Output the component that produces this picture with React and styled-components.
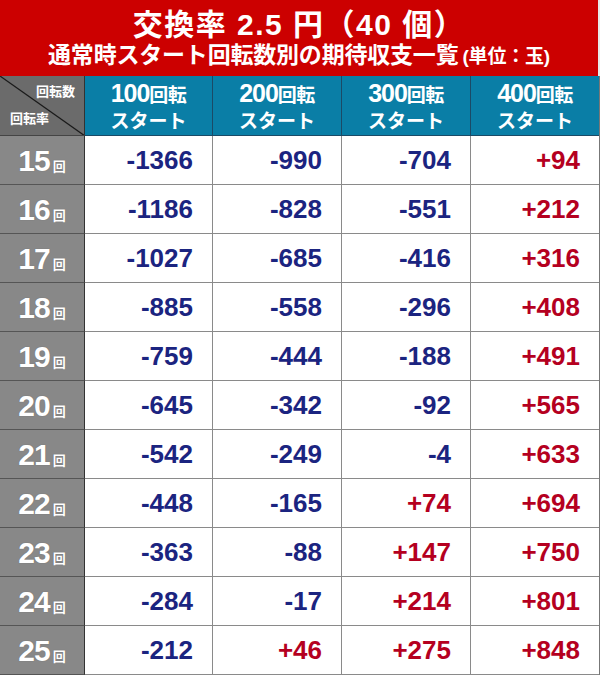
import React from "react";
import styled, { createGlobalStyle } from "styled-components";

const GlobalStyle = createGlobalStyle`
  html, body {
    margin: 0;
    padding: 0;
    background: #ffffff;
  }
`;

const JP = `"Liberation Sans", "Noto Sans CJK JP", sans-serif`;

const rows = [
  [15, -1366, -990, -704, 94],
  [16, -1186, -828, -551, 212],
  [17, -1027, -685, -416, 316],
  [18, -885, -558, -296, 408],
  [19, -759, -444, -188, 491],
  [20, -645, -342, -92, 565],
  [21, -542, -249, -4, 633],
  [22, -448, -165, 74, 694],
  [23, -363, -88, 147, 750],
  [24, -284, -17, 214, 801],
  [25, -212, 46, 275, 848],
];

const Page = styled.div`
  width: 600px;
  font-family: ${JP};
  font-weight: 700;
`;

const Title = styled.div`
  height: 76px;
  background: #cc0000;
  color: #fff;
  display: flex;
  flex-direction: column;
  align-items: center;
  justify-content: center;
  box-sizing: border-box;
  padding-top: 2px;
  border-right: 2px solid #e8e8e8;
`;

const TitleMain = styled.div`
  font-size: 30px;
  line-height: 34px;
  letter-spacing: 1.5px;
`;

const TitleSub = styled.div`
  font-size: 23px;
  line-height: 27px;
  letter-spacing: -0.2px;
`;

const Unit = styled.span`
  font-size: 19px;
  margin-left: 4px;
`;

const Grid = styled.div`
  display: grid;
  grid-template-columns: 85px 128px 129px 129px 128px;
  grid-template-rows: 60px repeat(11, 49px);
  border-right: 1px solid #777;
`;

const Corner = styled.div`
  position: relative;
  background: #6b6b6b;
  border-right: 1px solid #333;
  border-bottom: 1px solid #444;
  color: #fff;
  font-size: 13px;
  overflow: hidden;
`;

const Diagonal = styled.svg`
  position: absolute;
  inset: 0;
`;

const CornerTop = styled.span`
  position: absolute;
  right: 9px;
  top: 5px;
`;

const CornerBottom = styled.span`
  position: absolute;
  left: 10px;
  bottom: 8px;
`;

const HeadCell = styled.div`
  background: #0a7ea6;
  color: #fff;
  border-right: 1px solid #1b4a66;
  border-bottom: 1px solid #1b4a66;
  display: flex;
  flex-direction: column;
  align-items: center;
  justify-content: center;
  padding-top: 3px;
  &:nth-child(5) {
    border-right: none;
  }
`;

const HeadTop = styled.div`
  line-height: 26px;
  letter-spacing: -0.5px;
`;

const HeadNum = styled.span`
  font-size: 25px;
  letter-spacing: -1px;
`;

const HeadKanji = styled.span`
  font-size: 19px;
`;

const HeadBottom = styled.div`
  font-size: 19px;
  line-height: 24px;
`;

const RateCell = styled.div`
  background: #888888;
  color: #fff;
  border-right: 1px solid #333;
  border-bottom: 1px solid #555;
  display: flex;
  align-items: center;
  justify-content: center;
  padding-top: 2px;
  text-shadow: 0 0 1px rgba(0, 0, 0, 0.25);
`;

const RateNum = styled.span`
  font-size: 30px;
  letter-spacing: -1px;
`;

const RateUnit = styled.span`
  font-size: 13px;
  margin-left: 3px;
  margin-top: 9px;
`;

const ValueCell = styled.div`
  background: #fff;
  border-right: 1px solid #8a8a8a;
  border-bottom: 1px solid #8a8a8a;
  display: flex;
  align-items: center;
  justify-content: flex-end;
  padding-right: 19px;
  font-family: "Liberation Sans", Arial, sans-serif;
  font-size: 26px;
  color: ${(p) => (p.$plus ? "#b5001f" : "#1b2480")};
  &:nth-child(5n) {
    border-right: none;
  }
`;

const fmt = (v) => (v > 0 ? `+${v}` : `${v}`);

export default function App() {
  return (
    <>
      <GlobalStyle />
      <Page>
        <Title>
          <TitleMain>交換率 2.5 円（40 個）</TitleMain>
          <TitleSub>
            通常時スタート回転数別の期待収支一覧<Unit>(単位：玉)</Unit>
          </TitleSub>
        </Title>
        <Grid>
          <Corner>
            <Diagonal width="85" height="60" viewBox="0 0 85 60">
              <line x1="0" y1="0" x2="85" y2="60" stroke="#1a1a1a" strokeWidth="1.2" />
            </Diagonal>
            <CornerTop>回転数</CornerTop>
            <CornerBottom>回転率</CornerBottom>
          </Corner>
          {[100, 200, 300, 400].map((n) => (
            <HeadCell key={n}>
              <HeadTop>
                <HeadNum>{n}</HeadNum>
                <HeadKanji>回転</HeadKanji>
              </HeadTop>
              <HeadBottom>スタート</HeadBottom>
            </HeadCell>
          ))}
          {rows.map(([rate, ...vals]) => (
            <React.Fragment key={rate}>
              <RateCell>
                <RateNum>{rate}</RateNum>
                <RateUnit>回</RateUnit>
              </RateCell>
              {vals.map((v, i) => (
                <ValueCell key={i} $plus={v > 0}>
                  {fmt(v)}
                </ValueCell>
              ))}
            </React.Fragment>
          ))}
        </Grid>
      </Page>
    </>
  );
}
